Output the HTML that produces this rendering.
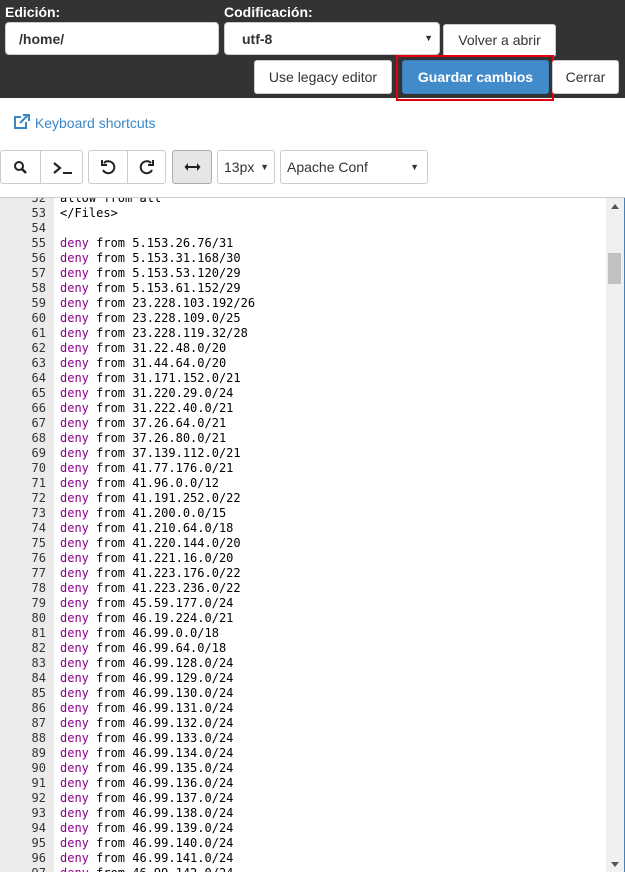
<!DOCTYPE html>
<html><head><meta charset="utf-8"><style>
*{box-sizing:border-box;margin:0;padding:0}
body{width:625px;height:872px;overflow:hidden;background:#fff;font-family:"Liberation Sans",sans-serif;position:relative}
.hdr{position:absolute;left:0;top:0;width:625px;height:98px;background:#333}
.lbl{position:absolute;color:#fff;font-weight:bold;font-size:14px;top:4px}
.box{position:absolute;background:#fff;border-radius:4px;border:1px solid #ccc;font-size:14px;color:#333}
.btn{position:absolute;background:#fff;border:1px solid #ccc;border-radius:3px;font-size:14px;color:#333;text-align:center}
.ks{position:absolute;left:13px;top:114px;color:#3a87c8;font-size:14px}
.tb{position:absolute;top:150px;height:34px;border:1px solid #ccc;background:#fff;border-radius:3px}
.ed{position:absolute;left:0;top:197px;width:625px;height:675px;border-top:1px solid #ccc;overflow:hidden}
.gut{position:absolute;left:0;top:0;width:54px;height:100%;background:#ebebeb}
.code{position:absolute;left:0;top:-7px;font-family:"DejaVu Sans Mono","Liberation Mono",monospace;font-size:12px;line-height:15px;color:#000}
.code div{white-space:pre;height:15px}
.code .n{display:inline-block;width:46px;text-align:right;color:#333;margin-right:14px}
.k{color:#8b008b}
.sb{position:absolute;right:1px;top:0;width:18px;height:675px;background:#f0f0f0}
.ar{position:absolute;font-size:9px}
</style></head><body>
<div class="hdr">
<div class="lbl" style="left:5px">Edición:</div>
<div class="lbl" style="left:224px">Codificación:</div>
<div class="box" style="left:5px;top:22px;width:214px;height:33px;font-weight:bold;padding:8px 0 0 13px">/home/</div>
<div class="box" style="left:224px;top:22px;width:216px;height:33px;font-weight:bold;padding:8px 0 0 17px">utf-8<span class="ar" style="right:6px;top:10px">▼</span></div>
<div class="btn" style="left:443px;top:24px;width:113px;height:33px;line-height:31px">Volver a abrir</div>
<div class="btn" style="left:254px;top:60px;width:138px;height:34px;line-height:32px">Use legacy editor</div>
<div style="position:absolute;left:396px;top:55px;width:158px;height:46px;border:2px solid #e00010"></div>
<div class="btn" style="left:402px;top:60px;width:147px;height:34px;line-height:32px;background:#428bca;border-color:#3a7fbd;color:#fff;font-weight:bold">Guardar cambios</div>
<div class="btn" style="left:552px;top:60px;width:67px;height:34px;line-height:32px">Cerrar</div>
</div>
<div class="ks"><svg width="18" height="16" viewBox="0 0 18 16" style="vertical-align:-2px"><path d="M8 3H2v11h11V8" fill="none" stroke="#3a87c8" stroke-width="2"/><path d="M7 9l8-8M10 1h6v6" fill="none" stroke="#3a87c8" stroke-width="2"/></svg> Keyboard shortcuts</div>
<div class="tb" style="left:0;width:83px"><div style="position:absolute;left:39px;top:0;width:1px;height:32px;background:#ccc"></div>
<svg style="position:absolute;left:12px;top:9px" width="14" height="14"><circle cx="6" cy="6" r="4" fill="none" stroke="#222" stroke-width="2"/><path d="M9 9l4 4" stroke="#222" stroke-width="2.5"/></svg>
<svg style="position:absolute;left:51px;top:10px" width="22" height="14"><path d="M2 2l6 5-6 5" fill="none" stroke="#222" stroke-width="2.2"/><path d="M11 12h9" stroke="#222" stroke-width="2"/></svg></div>
<div class="tb" style="left:88px;width:78px"><div style="position:absolute;left:38px;top:0;width:1px;height:32px;background:#ccc"></div>
<svg style="position:absolute;left:11px;top:8px" width="16" height="16"><path d="M4 4a6 6 0 1 1-1 7" fill="none" stroke="#222" stroke-width="2"/><path d="M2 1v5h5" fill="none" stroke="#222" stroke-width="2"/></svg>
<svg style="position:absolute;left:50px;top:8px" width="16" height="16"><path d="M12 4a6 6 0 1 0 1 7" fill="none" stroke="#222" stroke-width="2"/><path d="M14 1v5H9" fill="none" stroke="#222" stroke-width="2"/></svg></div>
<div class="tb" style="left:172px;width:40px;background:#e6e6e6;border-color:#adadad"><svg style="position:absolute;left:11px;top:11px" width="17" height="10"><path d="M3 5h11" stroke="#222" stroke-width="2"/><path d="M4 1L0.5 5 4 9M13 1l3.5 4L13 9" fill="#222"/></svg></div>
<div class="tb" style="left:217px;width:58px;font-size:14px;color:#333;padding:8px 0 0 6px">13px<span class="ar" style="right:5px;top:11px">▼</span></div>
<div class="tb" style="left:280px;width:148px;font-size:14px;color:#333;padding:8px 0 0 6px">Apache Conf<span class="ar" style="right:8px;top:11px">▼</span></div>
<div class="ed"><div class="gut"></div>
<div class="code">
<div><span class="n">52</span>allow from all</div>
<div><span class="n">53</span>&lt;/Files&gt;</div>
<div><span class="n">54</span></div>
<div><span class="n">55</span><span class="k">deny</span> from 5.153.26.76/31</div>
<div><span class="n">56</span><span class="k">deny</span> from 5.153.31.168/30</div>
<div><span class="n">57</span><span class="k">deny</span> from 5.153.53.120/29</div>
<div><span class="n">58</span><span class="k">deny</span> from 5.153.61.152/29</div>
<div><span class="n">59</span><span class="k">deny</span> from 23.228.103.192/26</div>
<div><span class="n">60</span><span class="k">deny</span> from 23.228.109.0/25</div>
<div><span class="n">61</span><span class="k">deny</span> from 23.228.119.32/28</div>
<div><span class="n">62</span><span class="k">deny</span> from 31.22.48.0/20</div>
<div><span class="n">63</span><span class="k">deny</span> from 31.44.64.0/20</div>
<div><span class="n">64</span><span class="k">deny</span> from 31.171.152.0/21</div>
<div><span class="n">65</span><span class="k">deny</span> from 31.220.29.0/24</div>
<div><span class="n">66</span><span class="k">deny</span> from 31.222.40.0/21</div>
<div><span class="n">67</span><span class="k">deny</span> from 37.26.64.0/21</div>
<div><span class="n">68</span><span class="k">deny</span> from 37.26.80.0/21</div>
<div><span class="n">69</span><span class="k">deny</span> from 37.139.112.0/21</div>
<div><span class="n">70</span><span class="k">deny</span> from 41.77.176.0/21</div>
<div><span class="n">71</span><span class="k">deny</span> from 41.96.0.0/12</div>
<div><span class="n">72</span><span class="k">deny</span> from 41.191.252.0/22</div>
<div><span class="n">73</span><span class="k">deny</span> from 41.200.0.0/15</div>
<div><span class="n">74</span><span class="k">deny</span> from 41.210.64.0/18</div>
<div><span class="n">75</span><span class="k">deny</span> from 41.220.144.0/20</div>
<div><span class="n">76</span><span class="k">deny</span> from 41.221.16.0/20</div>
<div><span class="n">77</span><span class="k">deny</span> from 41.223.176.0/22</div>
<div><span class="n">78</span><span class="k">deny</span> from 41.223.236.0/22</div>
<div><span class="n">79</span><span class="k">deny</span> from 45.59.177.0/24</div>
<div><span class="n">80</span><span class="k">deny</span> from 46.19.224.0/21</div>
<div><span class="n">81</span><span class="k">deny</span> from 46.99.0.0/18</div>
<div><span class="n">82</span><span class="k">deny</span> from 46.99.64.0/18</div>
<div><span class="n">83</span><span class="k">deny</span> from 46.99.128.0/24</div>
<div><span class="n">84</span><span class="k">deny</span> from 46.99.129.0/24</div>
<div><span class="n">85</span><span class="k">deny</span> from 46.99.130.0/24</div>
<div><span class="n">86</span><span class="k">deny</span> from 46.99.131.0/24</div>
<div><span class="n">87</span><span class="k">deny</span> from 46.99.132.0/24</div>
<div><span class="n">88</span><span class="k">deny</span> from 46.99.133.0/24</div>
<div><span class="n">89</span><span class="k">deny</span> from 46.99.134.0/24</div>
<div><span class="n">90</span><span class="k">deny</span> from 46.99.135.0/24</div>
<div><span class="n">91</span><span class="k">deny</span> from 46.99.136.0/24</div>
<div><span class="n">92</span><span class="k">deny</span> from 46.99.137.0/24</div>
<div><span class="n">93</span><span class="k">deny</span> from 46.99.138.0/24</div>
<div><span class="n">94</span><span class="k">deny</span> from 46.99.139.0/24</div>
<div><span class="n">95</span><span class="k">deny</span> from 46.99.140.0/24</div>
<div><span class="n">96</span><span class="k">deny</span> from 46.99.141.0/24</div>
<div><span class="n">97</span><span class="k">deny</span> from 46.99.142.0/24</div>
</div>
<div class="sb"><div style="position:absolute;left:5px;top:6px;width:0;height:0;border-left:4px solid transparent;border-right:4px solid transparent;border-bottom:5px solid #555"></div>
<div style="position:absolute;left:2px;top:55px;width:13px;height:31px;background:#c1c1c1"></div>
<div style="position:absolute;left:5px;bottom:6px;width:0;height:0;border-left:4px solid transparent;border-right:4px solid transparent;border-top:5px solid #555"></div></div>
<div style="position:absolute;right:0;top:0;width:1px;height:675px;background:#4a7fb8"></div>
</div>
</body></html>
